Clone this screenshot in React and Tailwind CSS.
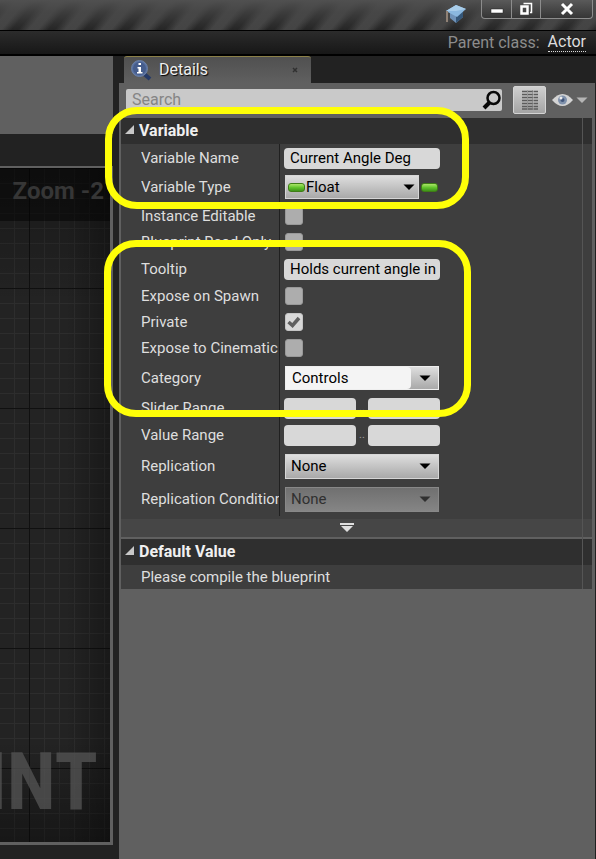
import React from "react";

const inputStyle =
  "min-w-0 h-[21px] rounded-[4px] bg-[#d8d8d8] pl-1.5 text-[15px] leading-5 text-black outline-none";

function Caret({ className = "fill-black" }) {
  return (
    <svg width="12" height="6" viewBox="0 0 12 6" className={className} aria-hidden="true">
      <path d="M0.5 0.5H11.5L6 6Z" />
    </svg>
  );
}

function Pill() {
  return (
    <span className="block h-[9px] w-[17px] rounded-[3px] border border-[#3f7d16] bg-linear-to-b from-[#a9e566] via-[#62c42c] to-[#3f941a]" />
  );
}

function Row({ label, height, id, children }) {
  return (
    <div className={`flex ${height}`}>
      <div className="flex w-[159px] shrink-0 items-center overflow-hidden border-r border-[#202020] pl-5">
        <label htmlFor={id} className="w-full overflow-hidden whitespace-nowrap">
          {label}
        </label>
      </div>
      <div className="flex w-[161px] shrink-0 items-center pl-1">{children}</div>
    </div>
  );
}

function Check({ id, checked = false }) {
  return (
    <span className="relative ml-px flex size-[18px]">
      <input
        id={id}
        type="checkbox"
        defaultChecked={checked}
        className="peer size-[18px] appearance-none rounded-[3px] border border-[#999999] bg-[#adadad] checked:border-[#c4c4c4] checked:bg-[#d8d8d8]"
      />
      <svg
        viewBox="0 0 18 18"
        className="pointer-events-none absolute inset-0 hidden fill-none stroke-[#606060] peer-checked:block"
        strokeWidth="3.5"
        aria-hidden="true"
      >
        <path d="M3.5 9L7.5 12.5L14 5" />
      </svg>
    </span>
  );
}

function Drop({ id, value, disabled = false }) {
  return (
    <span className="relative ml-px flex w-[154px]">
      <select
        id={id}
        disabled={disabled}
        className="h-[25px] w-full appearance-none border border-[#d6d6d6] bg-linear-to-b from-[#dedede] to-[#a9a9a9] pl-[5px] text-[15px] leading-5 text-black disabled:border-[#888888] disabled:from-[#707070] disabled:to-[#858585] disabled:text-[#303030] disabled:opacity-100"
      >
        <option>{value}</option>
      </select>
      <span className="pointer-events-none absolute inset-y-0 right-2 flex items-center">
        <Caret className={disabled ? "fill-[#303030]" : "fill-black"} />
      </span>
    </span>
  );
}

function Range({ id, label }) {
  return (
    <div className="flex w-full items-center pr-px">
      <input id={id} className={`${inputStyle} w-[72px]`} />
      <span className="w-3 text-center text-[11px] text-[#a0a0a0]">..</span>
      <input aria-label={label} className={`${inputStyle} w-[72px]`} />
    </div>
  );
}

function SectionHeader({ title }) {
  return (
    <h2 className="flex h-[26px] items-center bg-[#2f2f2f] text-base font-bold text-[#f0f0f0] [text-shadow:1px_2px_1px_#000]">
      <button className="flex items-center gap-[5px] pl-1">
        <svg width="9" height="13" viewBox="0 0 9 13" aria-hidden="true">
          <path d="M9 0V9H0Z" fill="#c8c8c8" />
        </svg>
        {title}
      </button>
    </h2>
  );
}

function TitleBar() {
  const control =
    "flex h-[19px] items-center justify-center border border-t-0 border-[#8c8c8c] bg-linear-to-b from-[#5a5a5a] to-[#363636]";
  return (
    <header className="flex h-[31px] items-start justify-end border-b border-black bg-[linear-gradient(to_bottom,#505050_0,#484848aa_40%,#25252500_100%),repeating-linear-gradient(130deg,#262626_0,#262626_5px,#444444_13px,#444444_20px,#262626_28px)] pr-[3px]">
      <svg width="20" height="22" viewBox="0 0 20 22" className="mt-[3px] mr-[15px]" aria-hidden="true">
        <path d="M4 9V15L10 20L17 14V8Z" fill="#6f92b8" />
        <path d="M10 13L17 8V14L10 20Z" fill="#355779" />
        <path d="M0 8L10 2L20 6L11 14Z" fill="#8bb8df" />
        <path d="M0 8L10 2L20 6L10 8Z" fill="#a9cdea" />
        <path d="M1 8V19" stroke="#8f8175" strokeWidth="2" />
      </svg>
      <button aria-label="Minimize" className={`${control} w-[31px] rounded-bl`}>
        <svg width="14" height="14" viewBox="0 0 14 14" aria-hidden="true">
          <rect x="1" y="7" width="12" height="4" fill="#fff" stroke="#222" strokeWidth=".5" />
        </svg>
      </button>
      <button aria-label="Restore" className={`${control} w-[29px] border-l-0`}>
        <svg width="14" height="14" viewBox="0 0 14 14" fill="none" stroke="#fff" aria-hidden="true">
          <path d="M4.5 1.5H12.5V10.5H11" strokeWidth="1.5" />
          <rect x="2.5" y="4.5" width="6" height="7" strokeWidth="2.5" />
        </svg>
      </button>
      <button aria-label="Close" className={`${control} w-[52px] rounded-br border-l-0`}>
        <svg width="14" height="14" viewBox="0 0 14 14" stroke="#fff" strokeWidth="3" aria-hidden="true">
          <path d="M2 2L12 12M12 2L2 12" />
        </svg>
      </button>
    </header>
  );
}

function Graph() {
  return (
    <div className="relative flex flex-1 flex-col justify-between overflow-hidden border-t-2 border-r-[3px] border-b-[3px] border-[#606060] bg-[#232323]">
      <svg className="absolute inset-0 size-full" aria-hidden="true">
        <defs>
          <pattern id="minor" width="15" height="15" patternUnits="userSpaceOnUse">
            <path d="M14.5 0V15M0 0.5H15" stroke="#2d2d2d" fill="none" />
          </pattern>
          <pattern id="major" width="120" height="120" patternUnits="userSpaceOnUse">
            <path d="M29.5 0V120M0 0.5H120" stroke="#101010" fill="none" />
          </pattern>
          <linearGradient id="shade" x1="0" y1="0" x2="0" y2="1">
            <stop offset="0" stopColor="#000" stopOpacity=".3" />
            <stop offset=".2" stopColor="#000" stopOpacity="0" />
            <stop offset=".85" stopColor="#000" stopOpacity="0" />
            <stop offset="1" stopColor="#000" stopOpacity=".35" />
          </linearGradient>
          <linearGradient id="edge" x1="0" y1="0" x2="1" y2="0">
            <stop offset=".6" stopColor="#000" stopOpacity="0" />
            <stop offset="1" stopColor="#000" stopOpacity=".3" />
          </linearGradient>
        </defs>
        <rect width="100%" height="100%" fill="url(#minor)" />
        <rect width="100%" height="100%" fill="url(#major)" />
        <rect width="100%" height="100%" fill="url(#shade)" />
        <rect width="100%" height="100%" fill="url(#edge)" />
      </svg>
      <div className="relative h-[53px] bg-black/45 pt-[7px] pr-1.5 text-right text-2xl leading-8 font-bold whitespace-nowrap text-[#363636]">
        Zoom -2
      </div>
      <div className="relative mb-4 flex justify-end pr-3 font-['Liberation_Sans_Narrow','Roboto_Condensed',Roboto,sans-serif] text-[80px] leading-[88px] font-bold text-[#565656]/75">
        INT
      </div>
    </div>
  );
}

function SearchBar() {
  return (
    <div className="flex h-[35px] items-center pr-[7px] pb-px pl-[7px]">
      <div className="relative flex flex-1">
        <input
          type="search"
          aria-label="Search"
          placeholder="Search"
          className="h-[22px] w-full min-w-0 rounded-[2px] bg-[#c9c9c9] px-1.5 pb-px text-base leading-5 text-black outline-none placeholder:text-[#858585]"
        />
        <svg
          width="20"
          height="20"
          viewBox="0 0 20 20"
          className="pointer-events-none absolute top-px right-0"
          fill="none"
          stroke="#080808"
          aria-hidden="true"
        >
          <circle cx="11.5" cy="8" r="6" strokeWidth="2.5" />
          <path d="M7 13L2 18" strokeWidth="4" />
        </svg>
      </div>
      <button
        aria-label="Property matrix"
        className="ml-[11px] flex h-7 w-[33px] items-center justify-center rounded-[2px] border border-[#d4d4d4] bg-linear-to-b from-[#cfcfcf] to-[#a4a4a4]"
      >
        <svg width="18" height="20" viewBox="0 0 18 20" stroke="#5c5c5c" aria-hidden="true">
          <path
            d="M1 1.5H17M1 4.5H17M1 7.5H17M1 10.5H17M1 13.5H17M1 16.5H17M1 19H17"
            strokeWidth="1.5"
            strokeDasharray="5 0.8"
          />
          <path d="M6.5 0V20M11.5 0V20" stroke="#777" strokeWidth=".5" />
        </svg>
      </button>
      <button aria-label="View options" className="ml-1.5 flex items-center gap-[3px]">
        <svg width="21" height="14" viewBox="0 0 21 14" aria-hidden="true">
          <path d="M0 7Q10.5-5 21 7Q10.5 19 0 7Z" fill="#d4d4d4" />
          <circle cx="10.5" cy="7" r="4.5" fill="#8092ac" />
          <circle cx="10.5" cy="7" r="2" fill="#40557a" />
          <circle cx="9" cy="5" r="1.5" fill="#eee" />
        </svg>
        <Caret className="fill-[#b5b5b5]" />
      </button>
    </div>
  );
}

function Details() {
  return (
    <section className="relative flex flex-1 flex-col border-r border-[#202020] bg-[#606060] text-[15px] leading-5 text-[#dedede]">
      <SearchBar />
      <div className="relative mr-[3px] ml-0.5">
        <div className="bg-[#3e3e3e]">
          <SectionHeader title="Variable" />
          <Row label="Variable Name" height="h-7" id="name">
            <input id="name" defaultValue="Current Angle Deg" className={`${inputStyle} w-[156px]`} />
          </Row>
          <Row label="Variable Type" height="h-[30px]" id="type">
            <span className="relative ml-px flex w-[134px]">
              <select
                id="type"
                className="h-6 w-full appearance-none border border-[#d6d6d6] bg-linear-to-b from-[#dedede] to-[#a9a9a9] pl-5 text-[15px] leading-5 text-black"
              >
                <option>Float</option>
              </select>
              <span className="pointer-events-none absolute inset-y-0 left-[3px] flex items-center">
                <Pill />
              </span>
              <span className="pointer-events-none absolute inset-y-0 right-1 flex items-center">
                <Caret />
              </span>
            </span>
            <span className="ml-0.5">
              <Pill />
            </span>
          </Row>
          <Row label="Instance Editable" height="h-7" id="editable">
            <Check id="editable" />
          </Row>
          <Row label="Blueprint Read Only" height="h-6" id="readonly">
            <Check id="readonly" />
          </Row>
          <Row label="Tooltip" height="h-[30px]" id="tooltip">
            <input id="tooltip" defaultValue="Holds current angle in" className={`${inputStyle} w-[156px]`} />
          </Row>
          <Row label="Expose on Spawn" height="h-6" id="spawn">
            <Check id="spawn" />
          </Row>
          <Row label="Private" height="h-7" id="private">
            <Check id="private" checked />
          </Row>
          <Row label="Expose to Cinematic" height="h-6" id="cinematics">
            <Check id="cinematics" />
          </Row>
          <Row label="Category" height="h-9" id="category">
            <div className="ml-px flex h-6 w-[154px] border border-[#eeeeee] bg-linear-to-b from-[#dedede] to-[#a9a9a9]">
              <input
                id="category"
                defaultValue="Controls"
                className="w-[125px] min-w-0 rounded-r-[4px] bg-[#f4f4f4] px-1.5 text-[15px] leading-5 text-black outline-none"
              />
              <button aria-label="Choose category" className="flex flex-1 items-center justify-center">
                <Caret />
              </button>
            </div>
          </Row>
          <Row label="Slider Range" height="h-6" id="slider">
            <Range id="slider" label="Slider Range maximum" />
          </Row>
          <Row label="Value Range" height="h-[30px]" id="range">
            <Range id="range" label="Value Range maximum" />
          </Row>
          <Row label="Replication" height="h-8" id="replication">
            <Drop id="replication" value="None" />
          </Row>
          <Row label="Replication Condition" height="h-[34px]" id="condition">
            <Drop id="condition" value="None" disabled />
          </Row>
          <button
            aria-label="Show advanced"
            className="mt-[3px] flex h-[18px] w-full items-center justify-center bg-[#464646] pr-5"
          >
            <svg width="14" height="10" viewBox="0 0 14 10" fill="#dedede" aria-hidden="true">
              <path d="M0 0H14V2H0ZM1 3H13L7 9Z" />
            </svg>
          </button>
        </div>
        <div className="mt-0.5 bg-[#3e3e3e]">
          <SectionHeader title="Default Value" />
          <p className="h-6 pl-5 leading-6">Please compile the blueprint</p>
        </div>
        <div className="pointer-events-none absolute inset-y-0 right-[9px] border-r border-[#555555]" />
        <div className="pointer-events-none absolute -top-[11px] -left-4 h-[102px] w-[364px] rounded-[32px] border-[7px] border-[#ffff08]" />
        <div className="pointer-events-none absolute top-[122px] -left-[17px] h-[177px] w-[367px] rounded-[32px] border-[7px] border-[#ffff08]" />
      </div>
    </section>
  );
}

export default function App() {
  return (
    <div className="flex min-h-screen flex-col overflow-hidden bg-[#222222] font-[Roboto,'Liberation_Sans',sans-serif]">
      <TitleBar />
      <div className="flex h-[25px] items-center justify-end gap-2 border-b-2 border-black bg-linear-to-b from-[#2c2c2c] to-[#171717] pr-2.5 text-base leading-5 text-[#8c8c8c]">
        <span>Parent class:</span>
        <a href="#actor" className="border-b border-dotted border-[#dddddd] leading-[18px] text-[#dddddd]">
          Actor
        </a>
      </div>
      <div className="flex flex-1">
        <main className="flex w-[113px] shrink-0 flex-col pb-3.5">
          <div className="mb-8 h-[78px] bg-[#606060]" />
          <Graph />
        </main>
        <aside className="ml-1.5 flex min-w-0 flex-1 flex-col">
          <div className="ml-[5px] flex h-[27px] w-[187px] items-center rounded-t-[3px] border-t border-[#8b8048] bg-linear-to-b from-[#505050] to-[#606060] pr-[13px] pb-px pl-1.5 text-base leading-5 text-[#efefef] [text-shadow:1px_1px_1px_#000]">
            <svg width="22" height="22" viewBox="0 0 22 22" className="mr-[7px]" aria-hidden="true">
              <path d="M13 14L20 20" stroke="#263a67" strokeWidth="4" />
              <circle cx="9.5" cy="9.5" r="8" fill="#5870a0" stroke="#6b80a6" />
              <circle cx="9.5" cy="9.5" r="6.5" fill="#465d8c" />
              <path d="M8.5 4H11V6H8.5ZM7.5 8H11V13H12.5V14.5H7V13H8.5V9.5H7.5Z" fill="#fff" />
            </svg>
            <h1 className="flex-1">Details</h1>
            <button aria-label="Close Details">
              <svg width="6" height="6" viewBox="0 0 6 6" stroke="#303030" strokeWidth="1.5" aria-hidden="true">
                <path d="M1 1L5 5M5 1L1 5" />
              </svg>
            </button>
          </div>
          <Details />
        </aside>
      </div>
    </div>
  );
}
